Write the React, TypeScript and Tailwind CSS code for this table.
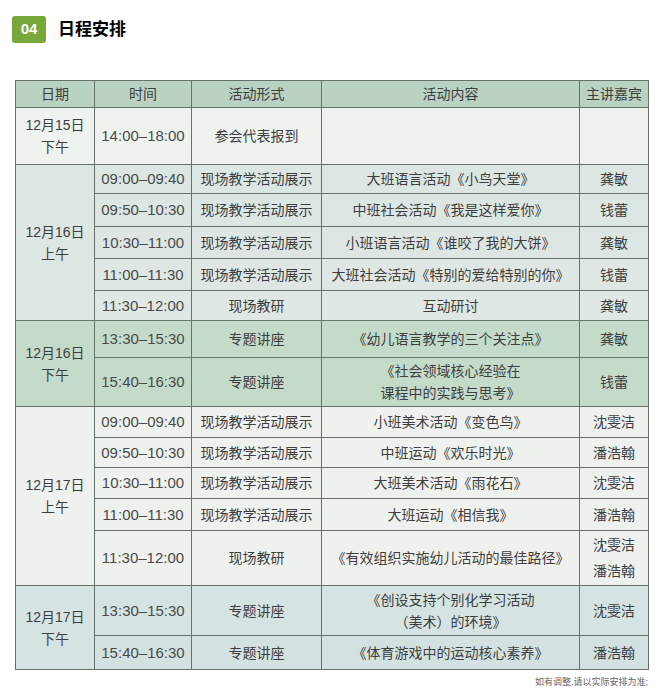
const font = '"Liberation Sans", "Noto Sans CJK SC", sans-serif'

type Row = {
  date?: { text: string[]; span: number }
  time: string
  form: string
  content: string[]
  speaker?: string[]
  h: number
  bg: string
}

const rows: Row[] = [
  { date: { text: ['12月15日', '下午'], span: 1 }, time: '14:00–18:00', form: '参会代表报到', content: [], speaker: [], h: 57, bg: 'bg-[#eff3ef]' },
  { date: { text: ['12月16日', '上午'], span: 5 }, time: '09:00–09:40', form: '现场教学活动展示', content: ['大班语言活动《小鸟天堂》'], speaker: ['龚敏'], h: 29, bg: 'bg-[#dce6e3]' },
  { time: '09:50–10:30', form: '现场教学活动展示', content: ['中班社会活动《我是这样爱你》'], speaker: ['钱蕾'], h: 33, bg: 'bg-[#dce6e3]' },
  { time: '10:30–11:00', form: '现场教学活动展示', content: ['小班语言活动《谁咬了我的大饼》'], speaker: ['龚敏'], h: 32, bg: 'bg-[#dde6e3]' },
  { time: '11:00–11:30', form: '现场教学活动展示', content: ['大班社会活动《特别的爱给特别的你》'], speaker: ['钱蕾'], h: 32, bg: 'bg-[#dee7e3]' },
  { time: '11:30–12:00', form: '现场教研', content: ['互动研讨'], speaker: ['龚敏'], h: 30, bg: 'bg-[#dfe8e4]' },
  { date: { text: ['12月16日', '下午'], span: 2 }, time: '13:30–15:30', form: '专题讲座', content: ['《幼儿语言教学的三个关注点》'], speaker: ['龚敏'], h: 37, bg: 'bg-[#c4dbca]' },
  { time: '15:40–16:30', form: '专题讲座', content: ['《社会领域核心经验在', '课程中的实践与思考》'], speaker: ['钱蕾'], h: 49, bg: 'bg-[#c4dbca]' },
  { date: { text: ['12月17日', '上午'], span: 5 }, time: '09:00–09:40', form: '现场教学活动展示', content: ['小班美术活动《变色鸟》'], speaker: ['沈雯洁'], h: 31, bg: 'bg-[#eef1ee]' },
  { time: '09:50–10:30', form: '现场教学活动展示', content: ['中班运动《欢乐时光》'], speaker: ['潘浩翰'], h: 30, bg: 'bg-[#eef1ee]' },
  { time: '10:30–11:00', form: '现场教学活动展示', content: ['大班美术活动《雨花石》'], speaker: ['沈雯洁'], h: 31, bg: 'bg-[#eef1ee]' },
  { time: '11:00–11:30', form: '现场教学活动展示', content: ['大班运动《相信我》'], speaker: ['潘浩翰'], h: 32, bg: 'bg-[#eef1ee]' },
  { time: '11:30–12:00', form: '现场教研', content: ['《有效组织实施幼儿活动的最佳路径》'], speaker: ['沈雯洁', '潘浩翰'], h: 55, bg: 'bg-[#eff1ee]' },
  { date: { text: ['12月17日', '下午'], span: 2 }, time: '13:30–15:30', form: '专题讲座', content: ['《创设支持个别化学习活动', '（美术）的环境》'], speaker: ['沈雯洁'], h: 50, bg: 'bg-[#d5e3e3]' },
  { time: '15:40–16:30', form: '专题讲座', content: ['《体育游戏中的运动核心素养》'], speaker: ['潘浩翰'], h: 34, bg: 'bg-[#d3e2e1]' },
]

const cell = 'border border-[#66736b] text-center align-middle p-0 leading-[22px]'

export default function App() {
  return (
    <main className="w-[667px] h-[692px] bg-white" style={{ fontFamily: font }}>
      <div className="flex items-center gap-3 pl-3 pt-4 h-[43px]">
        <div className="w-[34px] h-[27px] rounded-[3px] bg-[#78a83a] flex items-center justify-center text-white font-bold text-[15px]">
          04
        </div>
        <h1 className="text-[17px] font-bold text-black">日程安排</h1>
      </div>

      <div className="pt-[37px] pl-[15px]">
        <table className="table-fixed border-collapse w-[633px] text-[14px] text-[#3e3e3e]">
          <colgroup>
            <col className="w-[79px]" />
            <col className="w-[97px]" />
            <col className="w-[130px]" />
            <col className="w-[258px]" />
            <col className="w-[69px]" />
          </colgroup>
          <thead>
            <tr className="h-[27px] bg-[#b9d2c1]">
              <th className={`${cell} font-normal`}>日期</th>
              <th className={`${cell} font-normal`}>时间</th>
              <th className={`${cell} font-normal`}>活动形式</th>
              <th className={`${cell} font-normal`}>活动内容</th>
              <th className={`${cell} font-normal`}>主讲嘉宾</th>
            </tr>
          </thead>
          <tbody>
            {rows.map((r, i) => (
              <tr key={i} className={r.bg} style={{ height: r.h }}>
                {r.date && (
                  <td rowSpan={r.date.span} className={cell}>
                    {r.date.text.map((t) => (
                      <div key={t}>{t}</div>
                    ))}
                  </td>
                )}
                <td className={`${cell} text-[15px] text-[#4a4a4a]`}>{r.time}</td>
                <td className={cell}>{r.form}</td>
                <td className={cell}>
                  {r.content.map((t) => (
                    <div key={t}>{t}</div>
                  ))}
                </td>
                <td className={`${cell} ${r.speaker && r.speaker.length > 1 ? 'leading-[26px]' : ''}`}>
                  {r.speaker?.map((t) => (
                    <div key={t}>{t}</div>
                  ))}
                </td>
              </tr>
            ))}
          </tbody>
        </table>
        <div className="w-[633px] text-right text-[9px] text-[#666] mt-[6px]">如有调整,请以实际安排为准;</div>
      </div>
    </main>
  )
}
